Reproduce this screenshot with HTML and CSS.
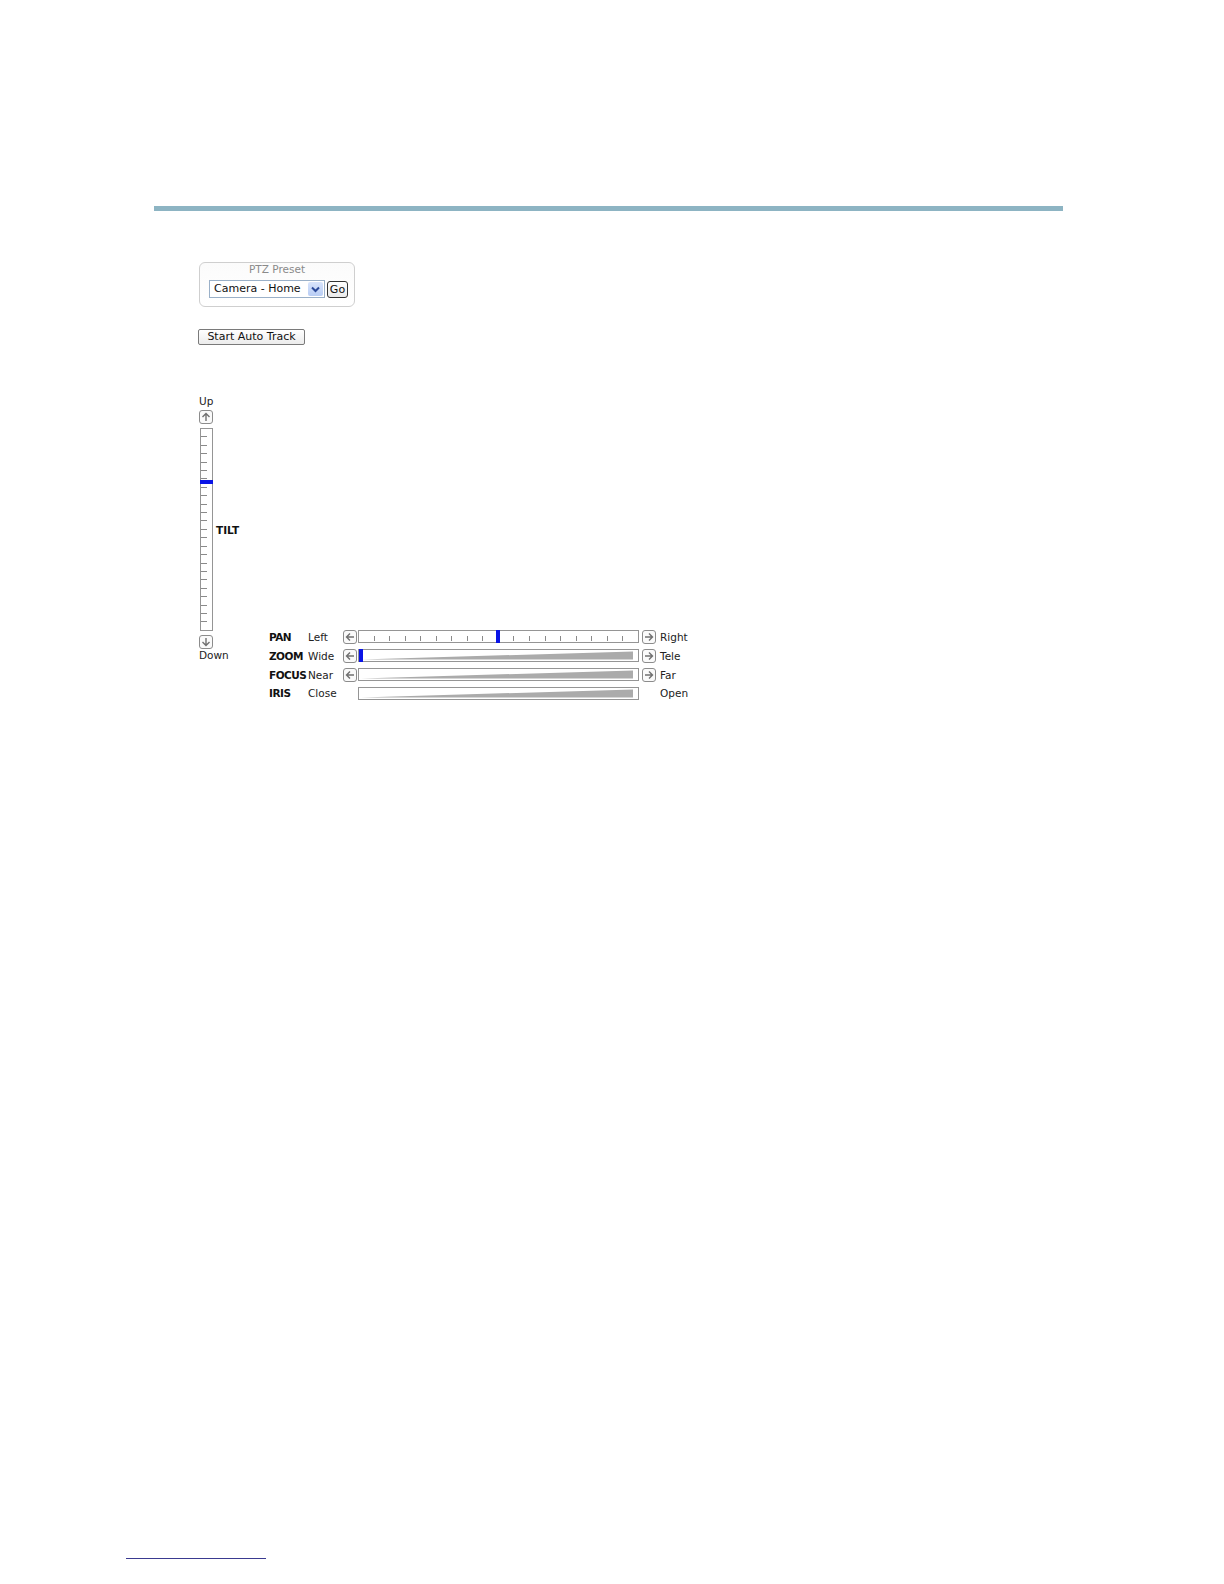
FILE: index.html
```html
<!DOCTYPE html>
<html>
<head>
<meta charset="utf-8">
<title>PTZ</title>
<link rel="stylesheet" href="styles.css">
</head>
<body>
<div class="rule"></div>
<div class="panel">
  <div class="preset">
    <div class="preset-title">PTZ Preset</div>
    <div class="preset-row">
      <div class="select"><span class="select-text">Camera - Home</span><span class="select-btn"><svg width="11" height="9" viewBox="0 0 11 9"><path d="M2 2.5 L5.5 6 L9 2.5" fill="none" stroke="#2b4a9a" stroke-width="2"/></svg></span></div>
      <div class="go">Go</div>
    </div>
  </div>
  <div class="autotrack">Start Auto Track</div>

  <div class="ptz">
    <div class="tilt">
      <div class="lbl">Up</div>
      <div class="abtn"><svg width="12" height="12" viewBox="0 0 12 12"><path d="M6 10 V2.5 M2.5 6 L6 2.5 L9.5 6" fill="none" stroke="#707070" stroke-width="1.4"/></svg></div>
      <div class="tilt-row">
        <div class="vtrack">
          <div class="vticks">
            <i></i><i></i><i></i><i></i><i></i><i></i><i></i><i></i><i></i><i></i><i></i><i></i><i></i><i></i><i></i><i></i><i></i><i></i><i></i><i></i><i></i><i></i><i></i>
          </div>
          <div class="vmark"></div>
        </div>
        <div class="tilt-name">TILT</div>
      </div>
      <div class="abtn down"><svg width="12" height="12" viewBox="0 0 12 12"><path d="M6 2 V9.5 M2.5 6 L6 9.5 L9.5 6" fill="none" stroke="#707070" stroke-width="1.4"/></svg></div>
      <div class="lbl">Down</div>
    </div>

    <div class="rows">
      <div class="row">
        <div class="name">PAN</div>
        <div class="sub">Left</div>
        <div class="abtn side"><svg width="12" height="12" viewBox="0 0 12 12"><path d="M10 6 H2.5 M6 2.5 L2.5 6 L6 9.5" fill="none" stroke="#707070" stroke-width="1.4"/></svg></div>
        <div class="htrack">
          <div class="hticks"><i></i><i></i><i></i><i></i><i></i><i></i><i></i><i></i><i></i><i></i><i></i><i></i><i></i><i></i><i></i><i></i><i></i></div>
          <div class="hmark pan-mark"></div>
        </div>
        <div class="abtn side right"><svg width="12" height="12" viewBox="0 0 12 12"><path d="M2 6 H9.5 M6 2.5 L9.5 6 L6 9.5" fill="none" stroke="#707070" stroke-width="1.4"/></svg></div>
        <div class="end">Right</div>
      </div>
      <div class="row">
        <div class="name">ZOOM</div>
        <div class="sub">Wide</div>
        <div class="abtn side"><svg width="12" height="12" viewBox="0 0 12 12"><path d="M10 6 H2.5 M6 2.5 L2.5 6 L6 9.5" fill="none" stroke="#707070" stroke-width="1.4"/></svg></div>
        <div class="htrack">
          <svg class="wedge" width="279" height="11" viewBox="0 0 279 11"><polygon points="2,9.5 274,9.5 274,1.5" fill="#ababab"/></svg>
          <div class="hmark zoom-mark"></div>
        </div>
        <div class="abtn side right"><svg width="12" height="12" viewBox="0 0 12 12"><path d="M2 6 H9.5 M6 2.5 L9.5 6 L6 9.5" fill="none" stroke="#707070" stroke-width="1.4"/></svg></div>
        <div class="end">Tele</div>
      </div>
      <div class="row">
        <div class="name">FOCUS</div>
        <div class="sub">Near</div>
        <div class="abtn side"><svg width="12" height="12" viewBox="0 0 12 12"><path d="M10 6 H2.5 M6 2.5 L2.5 6 L6 9.5" fill="none" stroke="#707070" stroke-width="1.4"/></svg></div>
        <div class="htrack">
          <svg class="wedge" width="279" height="11" viewBox="0 0 279 11"><polygon points="2,9.5 274,9.5 274,1.5" fill="#ababab"/></svg>
        </div>
        <div class="abtn side right"><svg width="12" height="12" viewBox="0 0 12 12"><path d="M2 6 H9.5 M6 2.5 L9.5 6 L6 9.5" fill="none" stroke="#707070" stroke-width="1.4"/></svg></div>
        <div class="end">Far</div>
      </div>
      <div class="row short">
        <div class="name">IRIS</div>
        <div class="sub">Close</div>
        <div class="spacer"></div>
        <div class="htrack">
          <svg class="wedge" width="279" height="11" viewBox="0 0 279 11"><polygon points="2,9.5 274,9.5 274,1.5" fill="#ababab"/></svg>
        </div>
        <div class="spacer right"></div>
        <div class="end">Open</div>
      </div>
    </div>
  </div>
</div>
<div class="footnote-rule"></div>
</body>
</html>
```
FILE: styles.css
```css
html, body {
  margin: 0;
  padding: 0;
  background: #ffffff;
}
body {
  width: 1224px;
  height: 1584px;
  font-family: "DejaVu Sans", Verdana, sans-serif;
  color: #222;
  position: relative;
}
.rule {
  margin: 206px 0 0 154px;
  width: 909px;
  height: 5px;
  background: #8db4c3;
}
.panel {
  margin: 51px 0 0 199px;
}
.preset {
  box-sizing: border-box;
  width: 156px;
  height: 45px;
  border: 1px solid #cfcfcf;
  border-radius: 6px;
  background: linear-gradient(#fbfbfb, #ffffff);
}
.preset-title {
  font-size: 10.5px;
  line-height: 12px;
  padding-top: 0px;
  text-align: center;
  color: #8a8a8a;
}
.preset-row {
  display: flex;
  margin: 5px 0 0 9px;
  align-items: center;
}
.select {
  box-sizing: border-box;
  width: 116px;
  height: 18px;
  border: 1px solid #9ab0c8;
  display: flex;
  align-items: center;
  background: #fff;
}
.select-text {
  flex: 1;
  font-size: 11px;
  padding-left: 4px;
  color: #111;
  line-height: 16px;
}
.select-btn {
  width: 15px;
  height: 14px;
  margin-right: 1px;
  background: linear-gradient(#d8e4fb, #b8cdf5);
  border-radius: 2px;
  display: flex;
  align-items: center;
  justify-content: center;
}
.go {
  box-sizing: border-box;
  margin-left: 2px;
  width: 21px;
  height: 17px;
  border: 1px solid #333;
  border-radius: 3px;
  font-size: 11px;
  line-height: 15px;
  text-align: center;
  background: linear-gradient(#ffffff, #eaeaea);
  color: #111;
}
.autotrack {
  box-sizing: border-box;
  margin: 22px 0 0 -1px;
  width: 107px;
  height: 16px;
  border: 1px solid #7a7a7a;
  border-radius: 2px;
  font-size: 11px;
  line-height: 14px;
  text-align: center;
  background: linear-gradient(#ffffff, #ececec);
  color: #111;
}
.ptz {
  display: flex;
  align-items: flex-start;
  margin-top: 50px;
}
.tilt {
  width: 70px;
  display: flex;
  flex-direction: column;
  align-items: flex-start;
}
.lbl {
  font-size: 10.5px;
  line-height: 12px;
  color: #222;
}
.abtn {
  box-sizing: border-box;
  width: 14px;
  height: 14px;
  border: 1px solid #8c8c8c;
  border-radius: 3px;
  display: flex;
  align-items: center;
  justify-content: center;
  background: #fafafa;
  margin-top: 3px;
}
.abtn.down {
  margin-top: 4px;
  margin-bottom: 0px;
}
.tilt-row {
  display: flex;
  align-items: center;
  margin-top: 4px;
  margin-left: 1px;
}
.vtrack {
  position: relative;
  box-sizing: border-box;
  width: 13px;
  height: 203px;
  border: 1px solid #959595;
  background: #fff;
}
.vticks {
  height: 100%;
  display: flex;
  flex-direction: column;
  justify-content: space-evenly;
}
.vticks i {
  display: block;
  width: 6px;
  height: 1px;
  background: #8a8a8a;
}
.vmark {
  position: absolute;
  left: -1px;
  right: -1px;
  top: 51px;
  height: 4px;
  background: #0a14e6;
}
.tilt-name {
  margin-left: 3px;
  font-size: 10.5px;
  font-weight: bold;
  color: #111;
}
.rows {
  margin-top: 232px;
  display: flex;
  flex-direction: column;
}
.row {
  display: flex;
  align-items: center;
  height: 19px;
}
.row.short {
  height: 18px;
}
.name {
  width: 39px;
  font-size: 10.5px;
  line-height: 12px;
  letter-spacing: -0.5px;
  font-weight: bold;
  color: #111;
  white-space: nowrap;
}
.sub {
  width: 35px;
  font-size: 10.5px;
  line-height: 12px;
  color: #222;
}
.abtn.side {
  margin-top: 0;
  margin-right: 1px;
}
.abtn.side.right {
  margin: 0 4px 0 3px;
}
.spacer {
  width: 15px;
}
.spacer.right {
  width: 21px;
}
.htrack {
  position: relative;
  box-sizing: border-box;
  width: 281px;
  height: 13px;
  border: 1px solid #959595;
  background: #fff;
}
.hticks {
  height: 100%;
  display: flex;
  justify-content: space-evenly;
  align-items: flex-end;
}
.hticks i {
  display: block;
  width: 1px;
  height: 5px;
  margin-bottom: 1px;
  background: #8a8a8a;
}
.wedge {
  display: block;
}
.hmark {
  position: absolute;
  top: -1px;
  bottom: -1px;
  width: 4px;
  background: #0a14e6;
}
.pan-mark {
  left: 137px;
}
.zoom-mark {
  left: 0px;
}
.end {
  font-size: 10.5px;
  line-height: 12px;
  color: #222;
}
.footnote-rule {
  position: absolute;
  left: 126px;
  top: 1558px;
  width: 140px;
  height: 1px;
  background: #3a3a90;
}
```
